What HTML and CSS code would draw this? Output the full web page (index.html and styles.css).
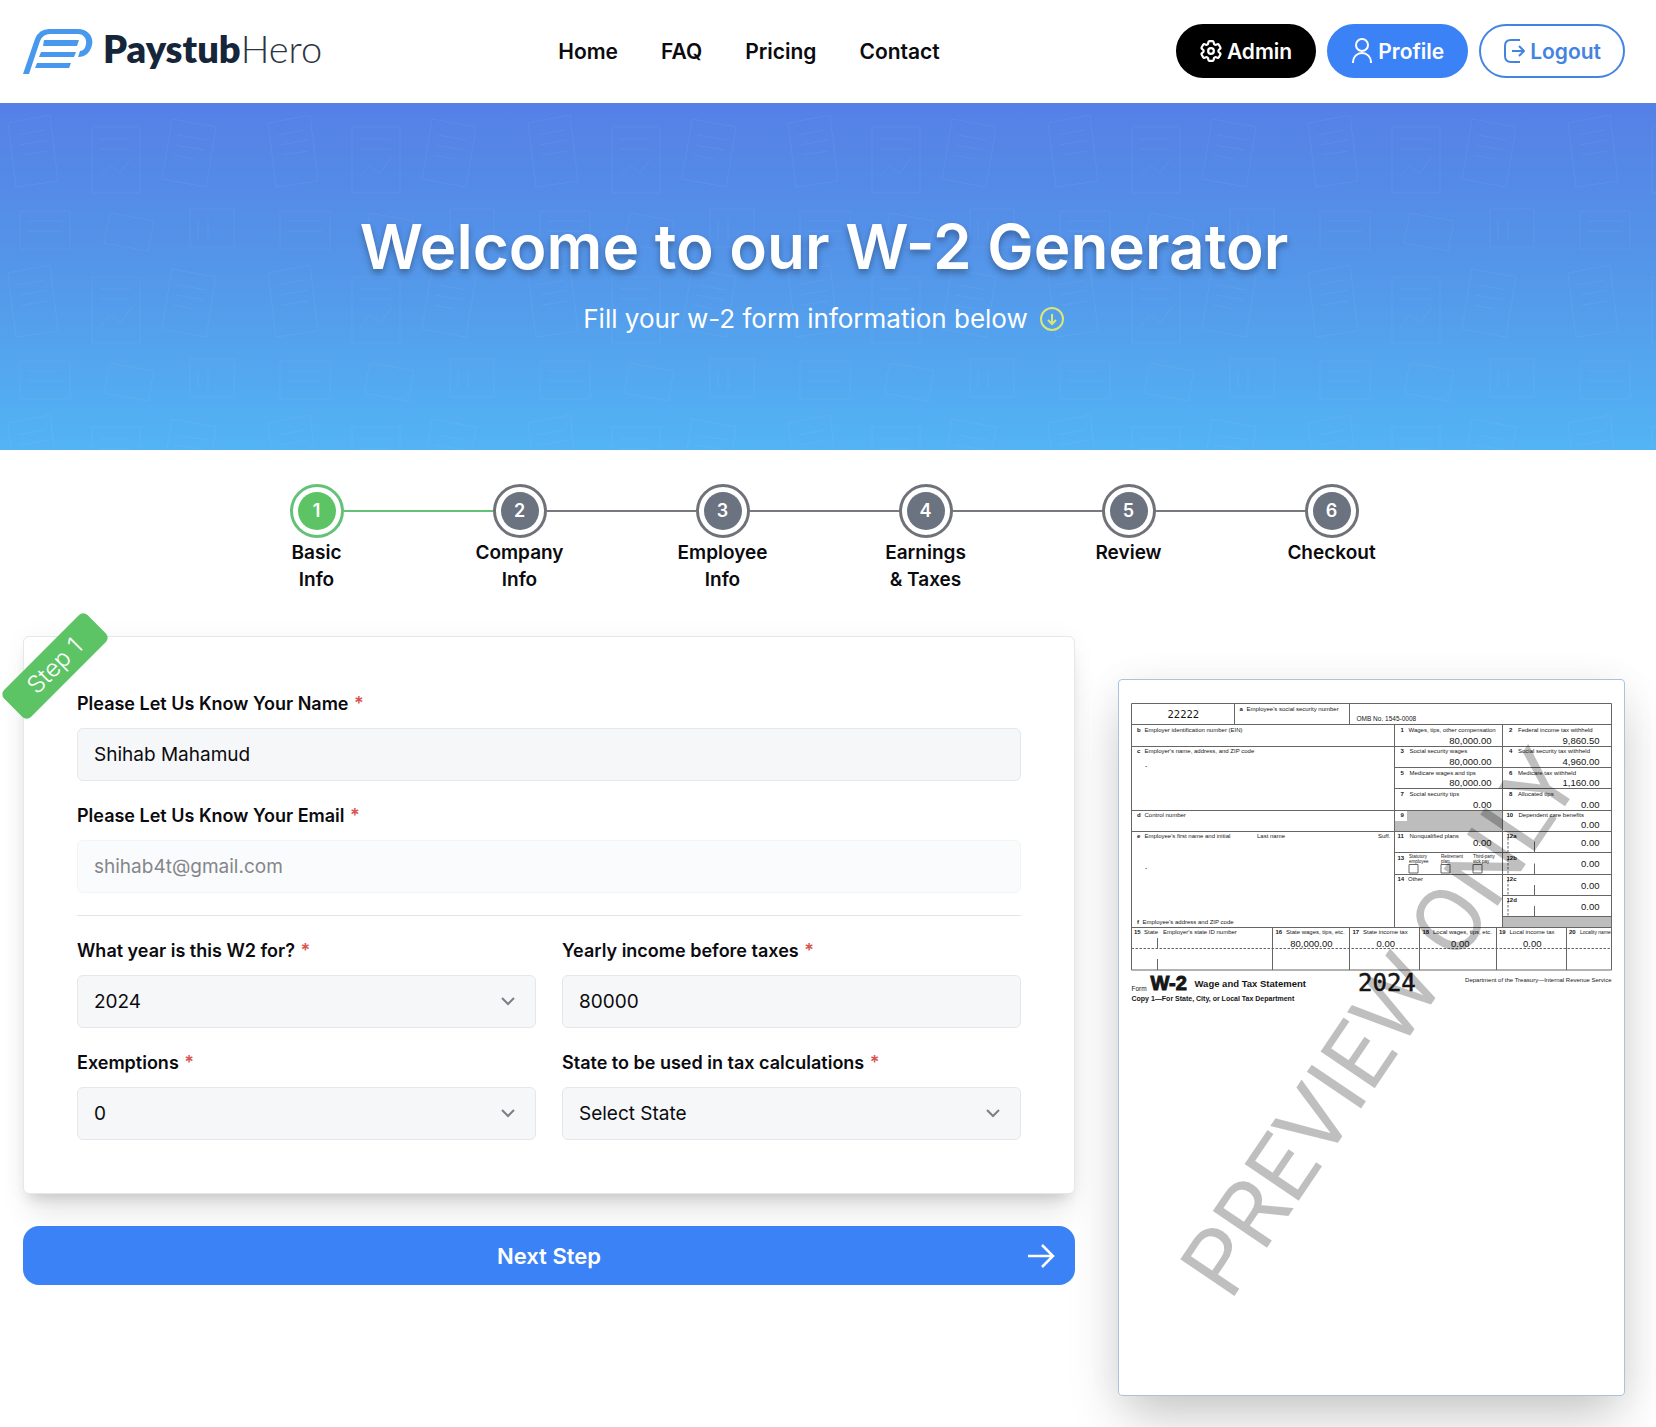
FILE: index.html
```html
<!DOCTYPE html>
<html lang="en">
<head>
<meta charset="utf-8">
<meta name="viewport" content="width=device-width, initial-scale=1">
<title>W-2 Generator | PaystubHero</title>
<link rel="stylesheet" href="styles.css">
</head>
<body>
<header class="site-header">
  <a class="logo" href="#">
    <svg class="logo-mark" viewBox="0 0 70 46" aria-hidden="true">
      <path d="M0 46 12 11Q16 1 26 1H55C65 1 71 9 69 17Q66 29 55 29L57 23Q62 23 63 16C64 10 60 6 55 6H27Q20 6 17 13L6 46Z" fill="#4898ee"/>
      <path d="M21 12H56L54 18H20ZM18 24H53L51 29H16ZM14 35H48L46 40H12Z" fill="#4898ee"/>
    </svg>
    <span class="logo-text"><b>Paystub</b>Hero</span>
  </a>
  <nav class="main-nav">
    <a href="#">Home</a>
    <a href="#">FAQ</a>
    <a href="#">Pricing</a>
    <a href="#">Contact</a>
  </nav>
  <div class="account">
    <a class="pill pill-admin" href="#">
      <svg class="icon-gear" viewBox="2 2 20 20" aria-hidden="true"><path d="M9.594 3.94c.09-.542.56-.94 1.11-.94h2.593c.55 0 1.02.398 1.11.94l.213 1.281c.063.374.313.686.645.87.074.04.147.083.22.127.325.196.72.257 1.075.124l1.217-.456a1.125 1.125 0 0 1 1.37.49l1.296 2.247a1.125 1.125 0 0 1-.26 1.431l-1.003.827c-.293.241-.438.613-.43.992a7.723 7.723 0 0 1 0 .255c-.008.378.137.75.43.991l1.004.827c.424.35.534.955.26 1.43l-1.298 2.247a1.125 1.125 0 0 1-1.369.491l-1.217-.456c-.355-.133-.75-.072-1.076.124a6.47 6.47 0 0 1-.22.128c-.331.183-.581.495-.644.869l-.213 1.281c-.09.543-.56.94-1.11.94h-2.594c-.55 0-1.019-.398-1.11-.94l-.213-1.281c-.062-.374-.312-.686-.644-.87a6.52 6.52 0 0 1-.22-.127c-.325-.196-.72-.257-1.076-.124l-1.217.456a1.125 1.125 0 0 1-1.369-.49l-1.297-2.247a1.125 1.125 0 0 1 .26-1.431l1.004-.827c.292-.24.437-.613.43-.991a6.932 6.932 0 0 1 0-.255c.007-.38-.138-.751-.43-.992l-1.004-.827a1.125 1.125 0 0 1-.26-1.43l1.297-2.247a1.125 1.125 0 0 1 1.37-.491l1.216.456c.356.133.751.072 1.076-.124.072-.044.146-.086.22-.128.332-.183.582-.495.644-.869z"/><circle cx="12" cy="12" r="2.6"/></svg>
      Admin
    </a>
    <a class="pill pill-profile" href="#">
      <svg class="icon-user" viewBox="0 0 22 26" aria-hidden="true"><circle cx="11" cy="7" r="6"/><path d="M2 25v-1a9 9 0 0 1 18 0v1"/></svg>
      Profile
    </a>
    <a class="pill pill-logout" href="#">
      <svg class="icon-exit" viewBox="0 0 22 26" aria-hidden="true"><path d="M17 2H8Q2 2 2 8v10q0 6 6 6h9M9 13h12M16 8l5 5-5 5"/></svg>
      Logout
    </a>
  </div>
</header>

<section class="hero">
  <svg class="hero-pattern" aria-hidden="true">
    <defs>
      <pattern id="papers" width="260" height="150" patternUnits="userSpaceOnUse">
        <g fill="none" stroke="#fff" stroke-width="1">
          <path d="M8 20 50 12 58 78 16 84ZM18 32l26-5M20 42l28-5M22 52l26-4"/>
          <path d="M92 24h48v66H92ZM100 36h30M100 46h30M100 74l10-12 10 8 12-16"/>
          <path d="M172 16 216 24 206 84 162 76ZM178 32l28 5M176 42l28 5M174 52l20 4"/>
          <path d="M20 108h50v38H20ZM28 118h34M28 128h34M110 110l44 8-6 30-44-8ZM190 106h44v38H190ZM198 116v20M208 116v20"/>
        </g>
      </pattern>
    </defs>
    <rect width="100%" height="100%" fill="url(#papers)"/>
  </svg>
  <h1>Welcome to our W-2 Generator</h1>
  <p>Fill your w-2 form information below
    <svg class="icon-down" viewBox="0 0 26 26" aria-hidden="true"><circle cx="13" cy="13" r="11"/><path d="M13 8v10M9 14l4 4 4-4"/></svg>
  </p>
</section>

<main>
  <ol class="steps">
    <li class="step active"><span class="dot"><span>1</span></span><span class="step-name">Basic<br>Info</span></li>
    <li class="step"><span class="dot"><span>2</span></span><span class="step-name">Company<br>Info</span></li>
    <li class="step"><span class="dot"><span>3</span></span><span class="step-name">Employee<br>Info</span></li>
    <li class="step"><span class="dot"><span>4</span></span><span class="step-name">Earnings<br>&amp; Taxes</span></li>
    <li class="step"><span class="dot"><span>5</span></span><span class="step-name">Review</span></li>
    <li class="step"><span class="dot"><span>6</span></span><span class="step-name">Checkout</span></li>
  </ol>

  <div class="workspace">
    <form class="wizard">
      <div class="card">
        <span class="ribbon">Step 1</span>
        <div class="field">
          <label for="name">Please Let Us Know Your Name <i>*</i></label>
          <input id="name" type="text" value="Shihab Mahamud">
        </div>
        <div class="field">
          <label for="email">Please Let Us Know Your Email <i>*</i></label>
          <input id="email" type="email" value="shihab4t@gmail.com" disabled>
        </div>
        <hr>
        <div class="pair">
          <div class="field">
            <label for="year">What year is this W2 for? <i>*</i></label>
            <div class="select"><select id="year"><option>2024</option></select><svg viewBox="0 0 14 9" aria-hidden="true"><path d="M1 1l6 6 6-6"/></svg></div>
          </div>
          <div class="field">
            <label for="income">Yearly income before taxes <i>*</i></label>
            <input id="income" type="text" value="80000">
          </div>
          <div class="field">
            <label for="exemptions">Exemptions <i>*</i></label>
            <div class="select"><select id="exemptions"><option>0</option></select><svg viewBox="0 0 14 9" aria-hidden="true"><path d="M1 1l6 6 6-6"/></svg></div>
          </div>
          <div class="field">
            <label for="state">State to be used in tax calculations <i>*</i></label>
            <div class="select"><select id="state"><option>Select State</option></select><svg viewBox="0 0 14 9" aria-hidden="true"><path d="M1 1l6 6 6-6"/></svg></div>
          </div>
        </div>
      </div>
      <button class="next" type="button">
        <span>Next Step</span>
        <svg viewBox="0 0 28 24" aria-hidden="true"><path d="M1 12h25M15 1l11 11-11 11"/></svg>
      </button>
    </form>

    <aside class="preview">
      <svg class="w2" viewBox="0 0 1014 1434" role="img" aria-label="W-2 preview">
        <g fill="#bdbdbd">
          <path d="M578 263H769V305H553V284H578Z"/>
          <path d="M769 475H987V497H769Z"/>
        </g>
        <g class="rules">
          <path d="M27 49H987V582H27ZM27 91H987M27 135H987M553 177H987M553 219H987M27 263H987M27 305H987M553 347H987M553 391H987M769 433H987M769 475H987M27 497H987"/>
          <path d="M233 49V91M463 49V91M553 91V497M769 91V497M309 497V582M463 497V582M603 497V582M757 497V582M897 497V582M79 518V539M79 560V582"/>
          <path d="M833 325V347M833 369V391M833 412V433M833 454V475"/>
          <path d="M582 371h18v17h-18ZM646 371h18v17h-18ZM710 371h18v17h-18Z"/>
          <path stroke-dasharray="5 3" d="M27 539H987M780 318V347M780 360V391M780 402V433M780 444V475"/>
        </g>
        <g class="caption">
          <text x="243" y="63" class="num">a</text><text x="257" y="63">Employee's social security number</text>
          <text x="477" y="83" class="wide">OMB No. 1545-0008</text>
          <text x="38" y="106" class="num">b</text><text x="53" y="106">Employer identification number (EIN)</text>
          <text x="38" y="148" class="num">c</text><text x="53" y="148">Employer's name, address, and ZIP code</text>
          <text x="38" y="276" class="num">d</text><text x="53" y="276">Control number</text>
          <text x="38" y="318" class="num">e</text><text x="53" y="318">Employee's first name and initial</text>
          <text x="278" y="318">Last name</text><text x="520" y="318">Suff.</text>
          <text x="38" y="490" class="num">f</text><text x="49" y="490">Employee's address and ZIP code</text>
          <text x="565" y="106" class="num">1</text><text x="581" y="106">Wages, tips, other compensation</text>
          <text x="782" y="106" class="num">2</text><text x="800" y="106">Federal income tax withheld</text>
          <text x="565" y="148" class="num">3</text><text x="583" y="148">Social security wages</text>
          <text x="782" y="148" class="num">4</text><text x="800" y="148">Social security tax withheld</text>
          <text x="565" y="191" class="num">5</text><text x="583" y="191">Medicare wages and tips</text>
          <text x="782" y="191" class="num">6</text><text x="800" y="191">Medicare tax withheld</text>
          <text x="565" y="233" class="num">7</text><text x="583" y="233">Social security tips</text>
          <text x="782" y="233" class="num">8</text><text x="800" y="233">Allocated tips</text>
          <text x="565" y="276" class="num">9</text>
          <text x="777" y="276" class="num">10</text><text x="801" y="276">Dependent care benefits</text>
          <text x="559" y="318" class="num">11</text><text x="583" y="318">Nonqualified plans</text>
          <text x="777" y="318" class="num">12a</text>
          <text x="559" y="361" class="num">13</text>
          <text x="777" y="361" class="num">12b</text>
          <text x="559" y="404" class="num">14</text><text x="580" y="404">Other</text>
          <text x="777" y="404" class="num">12c</text>
          <text x="777" y="446" class="num">12d</text>
          <text x="32" y="510" class="num">15</text><text x="52" y="510">State</text><text x="90" y="510">Employer's state ID number</text>
          <text x="315" y="510" class="num">16</text><text x="336" y="510">State wages, tips, etc.</text>
          <text x="469" y="510" class="num">17</text><text x="490" y="510">State income tax</text>
          <text x="609" y="510" class="num">18</text><text x="630" y="510">Local wages, tips, etc.</text>
          <text x="762" y="510" class="num">19</text><text x="783" y="510">Local income tax</text>
          <text x="902" y="510" class="num">20</text><text x="924" y="510" class="tight">Locality name</text>
          <text x="27" y="623" class="wide">Form</text>
          <text x="987" y="605" text-anchor="end">Department of the Treasury—Internal Revenue Service</text>
        </g>
        <g class="tiny">
          <text x="582" y="358">Statutory</text><text x="582" y="367">employee</text>
          <text x="646" y="358">Retirement</text><text x="646" y="367">plan</text>
          <text x="710" y="358">Third-party</text><text x="710" y="367">sick pay</text>
        </g>
        <g class="amount" text-anchor="end">
          <text x="747" y="130">80,000.00</text><text x="963" y="130">9,860.50</text>
          <text x="747" y="172">80,000.00</text><text x="963" y="172">4,960.00</text>
          <text x="747" y="214">80,000.00</text><text x="963" y="214">1,160.00</text>
          <text x="747" y="258">0.00</text><text x="963" y="258">0.00</text>
          <text x="963" y="298">0.00</text>
          <text x="747" y="334">0.00</text><text x="963" y="334">0.00</text>
          <text x="963" y="376">0.00</text><text x="963" y="420">0.00</text><text x="963" y="462">0.00</text>
          <text x="429" y="536">80,000.00</text><text x="554" y="536">0.00</text><text x="703" y="536">0.00</text><text x="847" y="536">0.00</text>
          <text x="59" y="176">.</text><text x="59" y="379">.</text>
        </g>
        <text class="code" x="99" y="77">22222</text>
        <text class="form-name" x="65" y="622">W-2</text>
        <text class="form-title" x="153" y="615">Wage and Tax Statement</text>
        <text class="copy" x="27" y="643">Copy 1—For State, City, or Local Tax Department</text>
        <text class="year" x="480" y="623">2024</text>
        <text class="watermark" transform="translate(233 1234) rotate(-56)" x="-15" y="0">PREVIEW ONLY</text>
      </svg>
    </aside>
  </div>
</main>
</body>
</html>
```
FILE: styles.css
```css
*,
*::before,
*::after {
  box-sizing: border-box;
}

body {
  margin: 0;
  background: #fff;
  color: #0b0b0f;
  font-family: Inter, "Liberation Sans", sans-serif;
  font-size: 18px;
  line-height: 27px;
}

a {
  color: inherit;
  text-decoration: none;
}

svg {
  display: block;
}

/* Header */
.site-header {
  display: flex;
  align-items: center;
  justify-content: space-between;
  padding: 24px 31px 25px 23px;
}

.logo {
  display: flex;
  align-items: center;
  gap: 10px;
}

.logo-mark {
  width: 70px;
  height: 46px;
}

.logo-text {
  padding-bottom: 6px;
  color: #2b3440;
  font-family: Lato, Inter, sans-serif;
  font-size: 38px;
  font-weight: 300;
  line-height: 46px;
}

.logo-text b {
  color: #16263a;
  font-weight: 800;
}

.main-nav {
  display: flex;
  gap: 43px;
  font-size: 21px;
  font-weight: 600;
}

.account {
  display: flex;
  gap: 11px;
}

.pill {
  display: flex;
  align-items: center;
  gap: 5px;
  height: 54px;
  padding: 0 22px;
  border: 2px solid;
  border-radius: 27px;
  font-size: 21px;
  font-weight: 600;
}

.pill svg {
  fill: none;
  stroke: currentColor;
  stroke-width: 2;
  stroke-linejoin: round;
}

.pill-admin {
  border-color: #000;
  background: #000;
  color: #fff;
}

.pill-profile {
  border-color: #3b82f6;
  background: #3b82f6;
  color: #fff;
}

.pill-logout {
  border-color: #4583e0;
  color: #4583e0;
}

.icon-gear {
  width: 22px;
  height: 22px;
}

.icon-user,
.icon-exit {
  width: 22px;
  height: 26px;
}

/* Hero */
.hero {
  position: relative;
  padding: 104px 31px 111px 23px;
  background: linear-gradient(#5580e6, #5493e8 42%, #53b4f4);
  color: #fff;
  text-align: center;
}

.hero-pattern {
  position: absolute;
  inset: 0;
  width: 100%;
  height: 100%;
  opacity: 0.05;
}

.hero h1 {
  position: relative;
  margin: 0;
  font-size: 62px;
  font-weight: 600;
  line-height: 80px;
  text-shadow: 0 4px 6px rgba(0, 0, 0, 0.3);
}

.hero p {
  position: relative;
  display: flex;
  align-items: center;
  justify-content: center;
  gap: 11px;
  margin: 12px 0 0;
  font-size: 26px;
  font-weight: 400;
  line-height: 40px;
}

.icon-down {
  width: 26px;
  height: 26px;
  fill: none;
  stroke: #dbe673;
  stroke-width: 2;
}

main {
  padding: 34px 31px 31px 23px;
}

/* Progress */
.steps {
  display: grid;
  grid-template-columns: repeat(6, 1fr);
  max-width: 1218px;
  margin: 0 auto;
  padding: 0;
  list-style: none;
}

.step {
  position: relative;
  display: flex;
  flex-direction: column;
  align-items: center;
  gap: 1px;
  color: #6b7280;
  text-align: center;
}

.step:not(:last-child)::after {
  content: "";
  position: absolute;
  top: 26px;
  left: calc(50% + 27px);
  width: calc(100% - 54px);
  height: 2px;
  background: #77797f;
}

.dot {
  display: grid;
  place-items: center;
  width: 54px;
  height: 54px;
  border: 3px solid #6f7278;
  border-radius: 50%;
}

.dot span {
  width: 38px;
  height: 38px;
  border-radius: 50%;
  background: #6b7280;
  color: #fff;
  font-weight: 600;
  line-height: 38px;
}

.step-name {
  color: #0b0b0f;
  font-size: 19px;
  font-weight: 600;
}

.step.active .dot {
  border-color: #64c178;
}

.step.active .dot span {
  background: #5dc466;
}

.step.active::after {
  background: #64c178;
}

/* Form */
.workspace {
  display: grid;
  grid-template-columns: 1052fr 507fr;
  gap: 43px;
  align-items: start;
  margin-top: 43px;
}

.wizard {
  display: grid;
  gap: 32px;
}

.card {
  position: relative;
  display: grid;
  gap: 21px;
  padding: 53px;
  border: 1px solid #e5e7eb;
  border-radius: 6px;
  background: #fff;
  box-shadow: 0 24px 28px -6px rgba(0, 0, 0, 0.1), 0 10px 12px -6px rgba(0, 0, 0, 0.12), 0 0 24px rgba(0, 0, 0, 0.04);
}

.ribbon {
  position: absolute;
  top: 10px;
  left: -28px;
  width: 118px;
  padding: 4px 0;
  border-radius: 6px;
  background: #5dc466;
  color: #fff;
  font-size: 24px;
  font-weight: 300;
  line-height: 30px;
  text-align: center;
  transform: rotate(-45deg);
}

.field {
  display: grid;
  gap: 11px;
}

.field label {
  font-weight: 600;
}

.field i {
  margin-left: 1px;
  color: #d9534f;
  font-style: normal;
}

.field input,
.field select {
  width: 100%;
  height: 53px;
  margin: 0;
  padding: 0 16px;
  border: 1px solid #e5e7eb;
  border-radius: 6px;
  background: #f6f7f9;
  color: #0b0b0f;
  font: inherit;
  font-size: 19px;
  appearance: none;
}

.field input:disabled {
  border-color: #f3f4f6;
  background: #fafbfc;
  color: #85868a;
}

.select {
  position: relative;
}

.select svg {
  position: absolute;
  top: 22px;
  right: 21px;
  width: 14px;
  height: 9px;
  fill: none;
  stroke: #7d7f83;
  stroke-width: 2;
  pointer-events: none;
}

hr {
  width: 100%;
  margin: 1px 0 0;
  border: 0;
  border-top: 1px solid #e1e4e8;
}

.pair {
  display: grid;
  grid-template-columns: 1fr 1fr;
  gap: 21px 26px;
}

.next {
  position: relative;
  display: flex;
  align-items: center;
  justify-content: center;
  height: 59px;
  padding: 0 20px;
  border: 0;
  border-radius: 16px;
  background: #3b82f6;
  color: #fff;
  font: 600 22px/30px Inter, "Liberation Sans", sans-serif;
}

.next svg {
  position: absolute;
  right: 20px;
  width: 28px;
  height: 24px;
  fill: none;
  stroke: currentColor;
  stroke-width: 2.5;
}

/* W-2 preview */
.preview {
  margin-top: 43px;
  border-radius: 4px;
  background: #fff;
  outline: 1px solid #a9c3dd;
  outline-offset: -1px;
  box-shadow: 0 25px 50px -6px rgba(0, 0, 0, 0.22), 0 0 40px rgba(0, 0, 0, 0.04);
}

.w2 {
  width: 100%;
  height: auto;
  fill: #161616;
  font-family: "Liberation Sans", Arial, sans-serif;
}

.rules {
  fill: none;
  stroke: #666;
  stroke-width: 2;
}

.caption {
  font-size: 12px;
}

.num {
  font-weight: 700;
}

.wide {
  font-size: 13px;
}

.tight {
  font-size: 10px;
}

.tiny {
  font-size: 9px;
}

.amount {
  font-size: 19px;
}

.code {
  font-family: "DejaVu Sans Mono", monospace;
  font-size: 21px;
}

.year {
  font-family: "DejaVu Sans Mono", monospace;
  font-size: 48px;
  stroke: #161616;
  stroke-width: 1;
}

.form-name {
  font-size: 40px;
  font-weight: 700;
  stroke: #161616;
  stroke-width: 2;
}

.form-title {
  font-size: 19px;
  font-weight: 700;
}

.copy {
  font-size: 14px;
  font-weight: 700;
}

.watermark {
  font-family: Roboto, "Liberation Sans", sans-serif;
  font-size: 184px;
  fill: rgba(0, 0, 0, 0.25);
}
```
